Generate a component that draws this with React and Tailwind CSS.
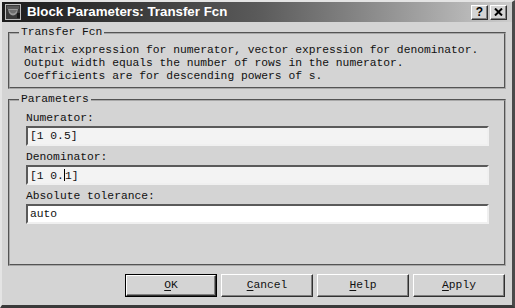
const mono = "font-['Liberation_Mono',monospace] text-[11.3px] leading-[13px] text-[#111]";

function TitleButton({ children }) {
  return (
    <div className="flex h-[15px] w-[17px] items-center justify-center border border-t-white border-l-white border-r-[#303030] border-b-[#303030] bg-[#d4d4d4] font-['Liberation_Sans',sans-serif] text-[12px] font-bold leading-none text-black shadow-[inset_-1px_-1px_0_#808080]">
      {children}
    </div>
  );
}

function Field({ label, children, white }) {
  return (
    <div className="flex flex-col">
      <div className={mono}>{label}</div>
      <div
        className={`mt-[1px] flex h-[20px] items-center border-2 border-t-[#5a5a5a] border-l-[#5a5a5a] border-r-[#f0f0f0] border-b-[#f0f0f0] pl-[2px] ${white ? 'bg-white' : 'bg-[#f3f3f3]'}`}
      >
        <span className={`${mono} whitespace-pre`}>{children}</span>
      </div>
    </div>
  );
}

function DialogButton({ first, rest, isDefault }) {
  return (
    <div className={`h-[23px] w-[92px] ${isDefault ? 'border border-black' : ''}`}>
      <div className="flex h-full w-full items-center justify-center border border-t-white border-l-white border-r-[#303030] border-b-[#303030] shadow-[inset_-1px_-1px_0_#808080]">
        <span className={`${mono} whitespace-pre`}>
          <span className="underline underline-offset-2">{first}</span>
          {rest}
        </span>
      </div>
    </div>
  );
}

export default function App() {
  return (
    <div className="flex h-[308px] w-[515px] flex-col border-t-2 border-l-2 border-r-[3px] border-b-[3px] border-t-[#e4e4e4] border-l-[#e4e4e4] border-r-[#4a4a4a] border-b-[#3a3a3a] bg-[#d4d4d4]">
      <div className="flex h-[20px] items-center bg-linear-to-r from-[#1c1c1c] via-[#5a5a5a] to-[#cccccc] pl-[3px] pr-[5px]">
        <svg width="16" height="16" viewBox="0 0 16 16" className="shrink-0">
          <rect x="0.5" y="0.5" width="15" height="15" fill="#3a3a3a" stroke="#bdbdbd" />
          <rect x="2" y="2" width="12" height="3" fill="#5a5a5a" />
          <path d="M3 5 L13 5 L12 9 Q8 14 4 9 Z" fill="#9a9a9a" />
          <path d="M4 6 L12 6 L11 8 Q8 11 5 8 Z" fill="#707070" />
          <rect x="12" y="9" width="3" height="5" fill="#1a1a1a" />
        </svg>
        <span className="ml-[6px] font-['Liberation_Sans',sans-serif] text-[13.3px] font-bold leading-none text-white">
          Block Parameters: Transfer Fcn
        </span>
        <div className="ml-auto flex gap-[2px]">
          <TitleButton>?</TitleButton>
          <TitleButton>
            <svg width="9" height="8" viewBox="0 0 9 8">
              <path d="M1 0.5 L8 7.5 M8 0.5 L1 7.5" stroke="#000" strokeWidth="2" />
            </svg>
          </TitleButton>
        </div>
      </div>

      <div className="flex flex-1 flex-col pl-[6px] pr-[6px]">
        <fieldset className="mt-[4px] border-2 border-[#a8a8a8] [border-style:groove]">
          <legend className={`${mono} ml-[9px] px-[2px]`}>Transfer Fcn</legend>
          <div className={`${mono} whitespace-pre px-[14px] pt-[5px] pb-[4px]`}>
            <div>Matrix expression for numerator, vector expression for denominator.</div>
            <div>Output width equals the number of rows in the numerator.</div>
            <div>Coefficients are for descending powers of s.</div>
          </div>
        </fieldset>

        <fieldset className="mt-[4px] border-2 border-[#a8a8a8] [border-style:groove]">
          <legend className={`${mono} ml-[9px] px-[2px]`}>Parameters</legend>
          <div className="flex flex-col gap-[5px] pl-[16px] pr-[15px] pt-[6px] pb-[40px]">
            <Field label="Numerator:">[1 0.5]</Field>
            <Field label="Denominator:">
              [1 0.<span className="inline-block h-[12px] w-[1px] translate-y-[2px] bg-black" />1]
            </Field>
            <Field label="Absolute tolerance:" white>
              auto
            </Field>
          </div>
        </fieldset>

        <div className="mt-[8px] flex justify-end gap-[4px] pr-[1px]">
          <DialogButton first="O" rest="K" isDefault />
          <DialogButton first="C" rest="ancel" />
          <DialogButton first="H" rest="elp" />
          <DialogButton first="A" rest="pply" />
        </div>
      </div>
    </div>
  );
}
